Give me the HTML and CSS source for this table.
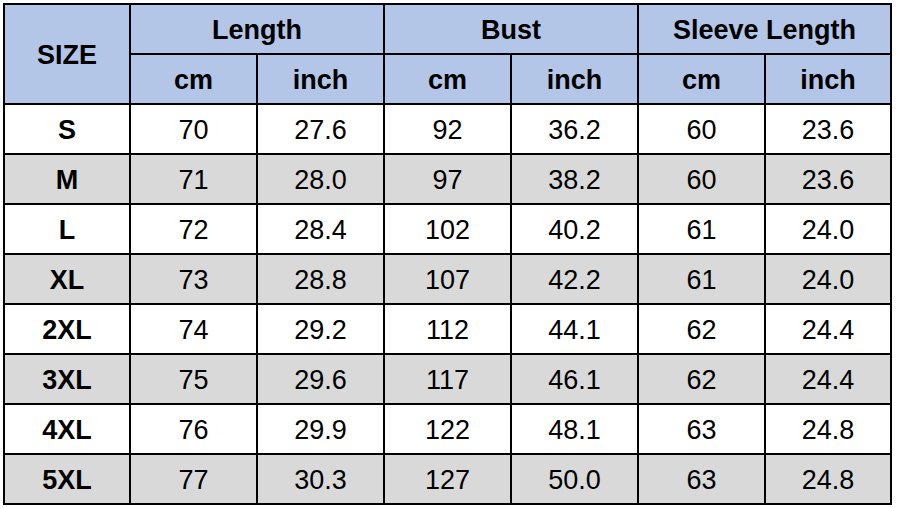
FILE: index.html
```html
<!DOCTYPE html>
<html>
<head>
<meta charset="utf-8">
<link rel="stylesheet" href="styles.css">
</head>
<body>
<div class="sheet">
  <div class="c hd size">SIZE</div>
  <div class="c hd span2">Length</div>
  <div class="c hd span2">Bust</div>
  <div class="c hd span2">Sleeve Length</div>
  <div class="c hd">cm</div><div class="c hd">inch</div>
  <div class="c hd">cm</div><div class="c hd">inch</div>
  <div class="c hd">cm</div><div class="c hd">inch</div>

  <div class="c b">S</div><div class="c">70</div><div class="c">27.6</div><div class="c">92</div><div class="c">36.2</div><div class="c">60</div><div class="c">23.6</div>
  <div class="c g b">M</div><div class="c g">71</div><div class="c g">28.0</div><div class="c g">97</div><div class="c g">38.2</div><div class="c g">60</div><div class="c g">23.6</div>
  <div class="c b">L</div><div class="c">72</div><div class="c">28.4</div><div class="c">102</div><div class="c">40.2</div><div class="c">61</div><div class="c">24.0</div>
  <div class="c g b">XL</div><div class="c g">73</div><div class="c g">28.8</div><div class="c g">107</div><div class="c g">42.2</div><div class="c g">61</div><div class="c g">24.0</div>
  <div class="c b">2XL</div><div class="c">74</div><div class="c">29.2</div><div class="c">112</div><div class="c">44.1</div><div class="c">62</div><div class="c">24.4</div>
  <div class="c g b">3XL</div><div class="c g">75</div><div class="c g">29.6</div><div class="c g">117</div><div class="c g">46.1</div><div class="c g">62</div><div class="c g">24.4</div>
  <div class="c b">4XL</div><div class="c">76</div><div class="c">29.9</div><div class="c">122</div><div class="c">48.1</div><div class="c">63</div><div class="c">24.8</div>
  <div class="c g b">5XL</div><div class="c g">77</div><div class="c g">30.3</div><div class="c g">127</div><div class="c g">50.0</div><div class="c g">63</div><div class="c g">24.8</div>
</div>
</body>
</html>
```
FILE: styles.css
```css
html, body {
  margin: 0;
  padding: 0;
  background: #ffffff;
}
body {
  padding: 3px;
  font-family: "Liberation Sans", Arial, sans-serif;
}
.sheet {
  display: grid;
  grid-template-columns: 126px 127px 127px 127px 127px 127px 126px;
  grid-template-rows: repeat(10, 50px);
  width: 887px;
  border-left: 2px solid #000;
  border-top: 2px solid #000;
}
.c {
  box-sizing: border-box;
  border-right: 2px solid #000;
  border-bottom: 2px solid #000;
  display: flex;
  align-items: center;
  justify-content: center;
  padding-top: 3px;
  font-size: 27px;
  color: #000;
  background: #ffffff;
  white-space: nowrap;
}
.hd {
  background: #b4c6e7;
  font-weight: bold;
}
.size {
  grid-row: span 2;
}
.span2 {
  grid-column: span 2;
}
.b {
  font-weight: bold;
}
.g {
  background: #d9d9d9;
}
```
